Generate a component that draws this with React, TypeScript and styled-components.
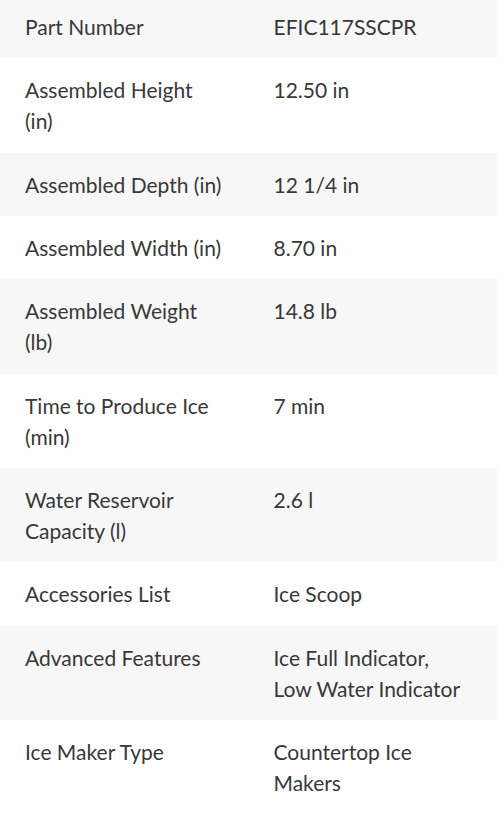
import React from 'react';
import styled, { createGlobalStyle } from 'styled-components';

interface Spec {
  label: string;
  value: string;
}

const specs: Spec[] = [
  { label: 'Part Number', value: 'EFIC117SSCPR' },
  { label: 'Assembled Height (in)', value: '12.50 in' },
  { label: 'Assembled Depth (in)', value: '12 1/4 in' },
  { label: 'Assembled Width (in)', value: '8.70 in' },
  { label: 'Assembled Weight (lb)', value: '14.8 lb' },
  { label: 'Time to Produce Ice (min)', value: '7 min' },
  { label: 'Water Reservoir Capacity (l)', value: '2.6 l' },
  { label: 'Accessories List', value: 'Ice Scoop' },
  { label: 'Advanced Features', value: 'Ice Full Indicator, Low Water Indicator' },
  { label: 'Ice Maker Type', value: 'Countertop Ice Makers' },
];

const GlobalStyle = createGlobalStyle`
  html, body {
    margin: 0;
    padding: 0;
    background: #fff;
  }
  body {
    font-family: Lato, "Open Sans", "Liberation Sans", sans-serif;
    color: #333;
    overflow: hidden;
  }
`;

const SpecTable = styled.div`
  width: 497px;
  margin-top: -5px;
  display: flex;
  flex-direction: column;
`;

const SpecRow = styled.div<{ $striped: boolean }>`
  display: grid;
  grid-template-columns: 1fr 1fr;
  background-color: ${p => (p.$striped ? '#f7f7f7' : '#fff')};
`;

const Cell = styled.div`
  padding: 16.1px 26px 16.1px 25px;
  font-size: 21px;
  line-height: 31.1px;
  color: #383838;
`;

const App: React.FC = () => {
  return (
    <>
      <GlobalStyle />
      <SpecTable>
        {specs.map((spec, i) => (
          <SpecRow key={spec.label} $striped={i % 2 === 0}>
            <Cell>{spec.label}</Cell>
            <Cell>{spec.value}</Cell>
          </SpecRow>
        ))}
      </SpecTable>
    </>
  );
};

export default App;
